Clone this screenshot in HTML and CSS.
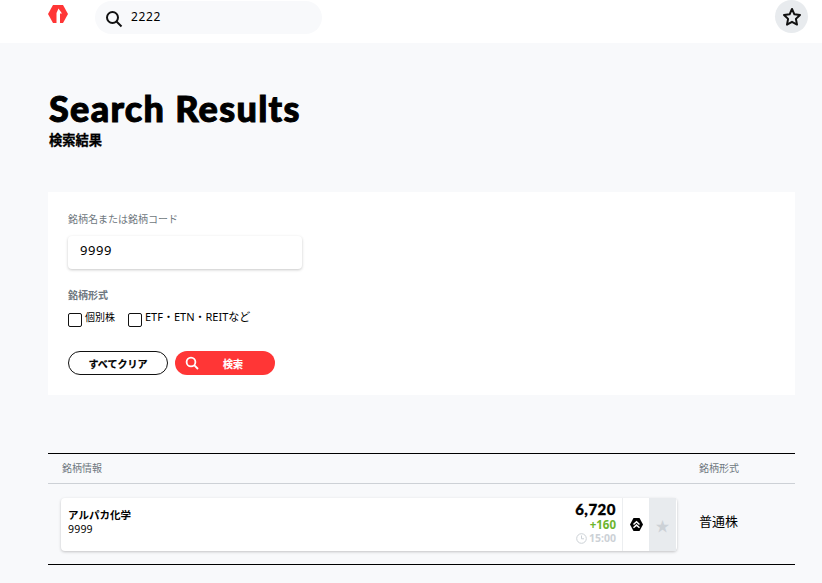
FILE: index.html
```html
<!DOCTYPE html>
<html lang="ja">
<head>
    <meta charset="UTF-8">
    <title>Search Results</title>
    <link rel="stylesheet" href="styles.css">
</head>
<body>
    <header class="top">
        <svg class="logo" width="20" height="20" viewBox="0 0 20 20">
            <path fill="#ff3636" d="M5 0H15L20 9L15 18H5L0 9Z"/>
            <path fill="#fff" d="M8.5 18V8L10.5 3.5L14 8.5H12V18Z"/>
        </svg>
        <div class="top-search">
            <svg class="top-search-icon" width="18" height="18" viewBox="0 0 18 18" fill="none" stroke="#111" stroke-width="2">
                <circle cx="7.5" cy="7.5" r="5.5"/>
                <path d="M11.5 11.5L16.5 16.5"/>
            </svg>
            <span class="top-search-text">2222</span>
        </div>
        <div class="fav-btn">
            <svg width="20" height="20" viewBox="0 0 20 20" fill="none" stroke="#111" stroke-width="2" stroke-linejoin="round">
                <path d="M10 2L12.4 7.3L18 8L13.9 11.9L15 17.6L10 14.8L5 17.6L6.1 11.9L2 8L7.6 7.3Z"/>
            </svg>
        </div>
    </header>

    <main class="content">
        <h1 class="title">Search Results</h1>
        <p class="subtitle">検索結果</p>

        <section class="form-card">
            <div class="field-label">銘柄名または銘柄コード</div>
            <div class="text-input">9999</div>
            <div class="type-label">銘柄形式</div>
            <div class="checks">
                <label class="check"><span class="box"></span><span class="check-small">個別株</span></label>
                <label class="check"><span class="box"></span><span>ETF・ETN・REITなど</span></label>
            </div>
            <div class="buttons">
                <div class="btn btn-clear">すべてクリア</div>
                <div class="btn btn-search">
                    <svg class="btn-icon" width="14" height="14" viewBox="0 0 14 14" fill="none" stroke="#fff" stroke-width="1.8">
                        <circle cx="6" cy="6" r="4.4"/>
                        <path d="M9.2 9.2L13 13"/>
                    </svg>
                    <span>検索</span>
                </div>
            </div>
        </section>

        <section class="results">
            <div class="results-head">
                <div class="col-info">銘柄情報</div>
                <div class="col-type">銘柄形式</div>
            </div>
            <div class="results-row">
                <div class="stock-card">
                    <div class="stock-name">
                        <div class="stock-title">アルパカ化学</div>
                        <div class="stock-code">9999</div>
                    </div>
                    <div class="stock-price">
                        <div class="price">6,720</div>
                        <div class="change">+160</div>
                        <div class="time">
                            <svg width="11" height="11" viewBox="0 0 11 11" fill="none" stroke="#ccd1d6" stroke-width="1">
                                <circle cx="5.5" cy="5.5" r="4.8"/>
                                <path d="M5.5 2.5V5.8H8"/>
                            </svg>
                            15:00
                        </div>
                    </div>
                    <div class="stock-mark">
                        <svg width="13" height="13" viewBox="0 0 13 13">
                            <path fill="#000" d="M3.5 0H9.5L13 6.5L9.5 13H3.5L0 6.5Z"/>
                            <path fill="none" stroke="#fff" stroke-width="1.5" d="M3.5 6.5L6.5 3.8L9.5 6.5M3.5 9.8L6.5 7.1L9.5 9.8"/>
                        </svg>
                    </div>
                    <div class="stock-fav">★</div>
                </div>
                <div class="row-type">普通株</div>
            </div>
        </section>
    </main>
</body>
</html>
```

FILE: styles.css
```css
* {
    box-sizing: border-box;
}

body {
    margin: 0;
    background-color: #f8f9fb;
    color: #000;
    font-family: "Noto Sans", "Noto Sans CJK JP", sans-serif;
}

/* header */
.top {
    height: 43px;
    background-color: #fff;
    display: flex;
    align-items: flex-start;
    padding: 0 14px 0 48px;
}

.logo {
    margin-top: 5px;
}

.top-search {
    width: 227px;
    height: 33px;
    margin: 1px 0 0 27px;
    padding-left: 10px;
    border-radius: 17px;
    background-color: #f8f9fb;
    display: flex;
    align-items: center;
}

.top-search-icon {
    margin-top: 3px;
}

.top-search-text {
    margin: -3px 0 0 8px;
    font-size: 12px;
    letter-spacing: 0.6px;
}

.fav-btn {
    width: 33px;
    height: 33px;
    margin-left: auto;
    border-radius: 50%;
    background-color: #e8ebee;
    display: flex;
    align-items: center;
    justify-content: center;
}

/* main */
.content {
    padding: 0 27px 0 48px;
}

.title {
    margin: 44px 0 0 1px;
    font-family: "Lato", "Noto Sans CJK JP", sans-serif;
    font-weight: 900;
    font-size: 36px;
    line-height: 42px;
    letter-spacing: 1.3px;
    -webkit-text-stroke: 1px #000;
}

.subtitle {
    margin: 2px 0 0 1px;
    font-size: 13.25px;
    font-weight: 700;
    line-height: 18px;
    -webkit-text-stroke: 0.3px #000;
}

/* search form */
.form-card {
    margin-top: 43px;
    height: 203px;
    background-color: #fff;
    padding: 20px;
}

.field-label {
    font-size: 10px;
    line-height: 14px;
    color: #6f7880;
}

.text-input {
    width: 234px;
    height: 33px;
    margin-top: 10px;
    padding-left: 12px;
    font-size: 13px;
    letter-spacing: 0.6px;
    line-height: 28px;
    border-radius: 4px;
    background-color: #fff;
    box-shadow: 0 1px 3px rgba(0, 0, 0, 0.22);
}

.type-label {
    margin-top: 19px;
    font-size: 10px;
    font-weight: 700;
    line-height: 14px;
    color: #6f7880;
}

.checks {
    display: flex;
    gap: 13px;
    margin-top: 8px;
}

.check {
    display: flex;
    align-items: flex-start;
    gap: 3px;
    font-size: 11px;
    line-height: 14px;
}

.check-small {
    font-size: 10px;
}

.box {
    width: 14px;
    height: 14px;
    margin-top: 3px;
    border: 1.5px solid #111;
    border-radius: 2px;
    background-color: #fff;
}

.buttons {
    display: flex;
    gap: 7px;
    margin-top: 24px;
}

.btn {
    width: 100px;
    height: 24px;
    border-radius: 12px;
    font-size: 10px;
    font-weight: 700;
    display: flex;
    align-items: center;
    justify-content: center;
}

.btn-clear {
    background-color: #fff;
    border: 1.5px solid #111;
    -webkit-text-stroke: 0.2px #000;
}

.btn-search {
    background-color: #ff3636;
    color: #fff;
    justify-content: flex-start;
    padding-left: 10px;
    -webkit-text-stroke: 0.2px #fff;
}

.btn-search span {
    margin-left: 24px;
}

/* results table */
.results {
    margin-top: 58px;
    border-top: 1px solid #000;
    border-bottom: 1px solid #000;
}

.results-head {
    height: 30px;
    border-bottom: 1px solid #cdd1d6;
    display: flex;
    align-items: center;
    justify-content: space-between;
    padding: 0 56px 3px 14px;
    font-size: 10px;
    color: #6f7880;
}

.results-row {
    height: 80px;
    display: flex;
    padding: 14px 0 0 13px;
}

.stock-card {
    width: 616px;
    height: 53px;
    background-color: #fff;
    border-radius: 4px;
    box-shadow: 0 1px 3px rgba(0, 0, 0, 0.22);
    display: flex;
}

.stock-name {
    flex: 1;
    padding: 10px 0 0 7px;
}

.stock-title {
    font-size: 10.5px;
    font-weight: 700;
    line-height: 15px;
}

.stock-code {
    font-size: 10.5px;
    letter-spacing: 0.2px;
    line-height: 13px;
}

.stock-price {
    padding: 3px 6px 0 0;
    text-align: right;
}

.price {
    font-family: "Lato", sans-serif;
    font-size: 15px;
    font-weight: 900;
    letter-spacing: 0.5px;
    line-height: 17px;
    -webkit-text-stroke: 0.3px #000;
}

.change {
    font-size: 11.5px;
    font-weight: 700;
    line-height: 13px;
    color: #6cb52d;
}

.time {
    font-size: 10.5px;
    font-weight: 700;
    line-height: 14px;
    color: #ccd1d6;
    display: flex;
    align-items: center;
    justify-content: flex-end;
    gap: 2px;
}

.stock-mark {
    width: 27px;
    border-left: 1px solid #eceef0;
    display: flex;
    align-items: center;
    justify-content: center;
}

.stock-fav {
    width: 27px;
    margin-right: 1px;
    background-color: #e8ebee;
    color: #ccd1d6;
    font-size: 14px;
    display: flex;
    align-items: center;
    justify-content: center;
}

.row-type {
    margin: 14px 0 0 22px;
    font-size: 13px;
    line-height: 18px;
}
```
